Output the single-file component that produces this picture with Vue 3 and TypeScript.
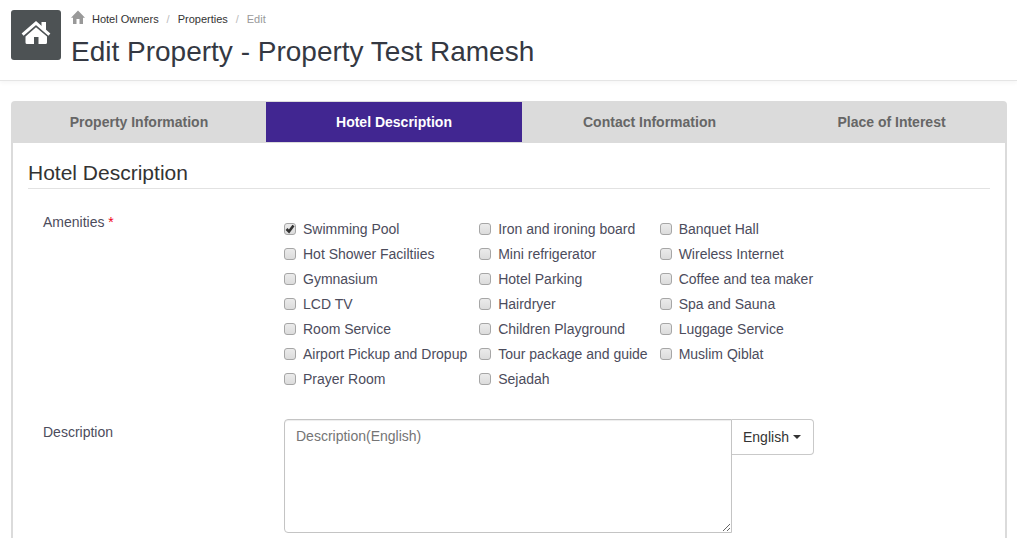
<script setup lang="ts">
import { ref } from 'vue'

interface Amenity {
  label: string
  checked: boolean
}

const tabs: string[] = ['Property Information', 'Hotel Description', 'Contact Information', 'Place of Interest']
const activeTab = ref<string>('Hotel Description')
const description = ref<string>('')

const amenities = ref<Amenity[]>(
  [
    'Swimming Pool', 'Iron and ironing board', 'Banquet Hall',
    'Hot Shower Faciltiies', 'Mini refrigerator', 'Wireless Internet',
    'Gymnasium', 'Hotel Parking', 'Coffee and tea maker',
    'LCD TV', 'Hairdryer', 'Spa and Sauna',
    'Room Service', 'Children Playground', 'Luggage Service',
    'Airport Pickup and Dropup', 'Tour package and guide', 'Muslim Qiblat',
    'Prayer Room', 'Sejadah',
  ].map((label, i) => ({ label, checked: i === 0 })),
)
</script>

<template>
  <div class="page">
    <header class="header">
      <div class="logo">
        <svg width="30" height="26" viewBox="0 0 30 26" aria-hidden="true">
          <path fill="none" stroke="#fff" stroke-width="3" d="M1.6 14.6 15 3 28.4 14.6" />
          <path fill="#fff" d="M20.5 2h4.5v8.5l-4.5-4zM15 7.2 26 16.500v6q0 1.500-1.500 1.500H17.500v-7h-4.500v7H6Q4.500 24 4.500 22.500V16.500z" />
        </svg>
      </div>
      <div class="heading">
        <nav class="crumbs" aria-label="Breadcrumb">
          <svg class="home" width="14" height="14" viewBox="0 0 14 14" aria-hidden="true">
            <path fill="#999" d="M7 0.500 14 7.800H12V14H8.500V9H5.500v5H2V7.800H0z" />
          </svg>
          <a href="#owners">Hotel Owners</a>
          <span class="sep">/</span>
          <a href="#properties">Properties</a>
          <span class="sep">/</span>
          <span class="current">Edit</span>
        </nav>
        <h1>Edit Property - Property Test Ramesh</h1>
      </div>
    </header>

    <main class="main">
      <div class="tabs" role="tablist">
        <button
          v-for="tab in tabs"
          :key="tab"
          type="button"
          role="tab"
          class="tab"
          :class="{ active: tab === activeTab }"
          :aria-selected="tab === activeTab"
          @click="activeTab = tab"
        >{{ tab }}</button>
      </div>
      <form class="panel" @submit.prevent>
        <h2>Hotel Description</h2>
        <div class="row" role="group" aria-labelledby="amenities-label">
          <div id="amenities-label" class="label">Amenities <span class="required">*</span></div>
          <div class="amenities">
            <label v-for="item in amenities" :key="item.label" class="amenity">
              <span class="box">
                <input v-model="item.checked" type="checkbox">
                <svg v-if="item.checked" class="tick" width="12" height="12" viewBox="0 0 12 12" aria-hidden="true">
                  <path fill="none" stroke="#333" stroke-width="2.600" d="M2.500 6 5 8.500 9.500 2.500" />
                </svg>
              </span>
              {{ item.label }}
            </label>
          </div>
        </div>
        <div class="row description">
          <label class="label" for="description">Description</label>
          <div class="group">
            <textarea id="description" v-model="description" placeholder="Description(English)"></textarea>
            <button type="button" class="language" aria-haspopup="true">English <span class="caret"></span></button>
          </div>
        </div>
      </form>
    </main>
  </div>
</template>

<style>
body {
  margin: 0;
  background: #fff;
}
</style>

<style scoped>
.page {
  box-sizing: border-box;
  display: flex;
  flex-direction: column;
  min-height: 100vh;
  font: 14px/20px "Liberation Sans", Arial, sans-serif;
  color: #4c4c5c;
}
.header {
  display: flex;
  gap: 10px;
  height: 70px;
  padding: 10px 11px 0;
  border-bottom: 1px solid #e5e5e5;
  box-shadow: 0 2px 4px rgba(0, 0, 0, 0.04);
}
.logo {
  display: flex;
  align-items: center;
  justify-content: center;
  width: 50px;
  height: 50px;
  border-radius: 3px;
  background: #4d5254;
}
.logo svg {
  margin-bottom: 4px;
}
.crumbs {
  display: flex;
  align-items: center;
  height: 18px;
  font-size: 11px;
  line-height: 18px;
}
.crumbs a {
  color: #333;
  text-decoration: none;
}
.home {
  margin: 0 7px 4px 0;
}
.sep {
  width: 19px;
  text-align: center;
  color: #bbb;
}
.current {
  color: #999;
}
h1 {
  margin: 6px 0 0;
  font-size: 28px;
  line-height: 36px;
  font-weight: normal;
  color: #343842;
}
.main {
  display: flex;
  flex-direction: column;
  flex: 1;
  padding: 20px 10px 0 11px;
}
.tabs {
  display: grid;
  grid-template-columns: 254fr 256fr 255fr 229fr;
  padding: 1px;
  border-radius: 4px 4px 0 0;
  background: #dbdbdb;
}
.tab {
  height: 40px;
  padding: 0;
  border: 0;
  background: #dbdbdb;
  color: #666;
  font: bold 14px/20px "Liberation Sans", Arial, sans-serif;
}
.tab.active {
  background: #412691;
  color: #fff;
}
.panel {
  flex: 1;
  padding: 17px 15px 0;
  border: solid #dbdbdb;
  border-width: 0 2px;
}
h2 {
  margin: 0 0 20px;
  padding-bottom: 2px;
  border-bottom: 1px solid #e2e2e2;
  font-size: 21px;
  line-height: 26px;
  font-weight: normal;
  color: #333;
}
.row {
  display: grid;
  grid-template-columns: 241px 1fr;
  padding: 0 15px;
}
.label {
  line-height: 26px;
}
.required {
  color: #f00018;
}
.amenities {
  display: grid;
  grid-template-columns: repeat(3, max-content);
  grid-auto-rows: 25px;
  column-gap: 12px;
  padding-top: 7px;
}
.amenity {
  display: flex;
  align-items: center;
  gap: 7px;
}
.box {
  position: relative;
  width: 12px;
  height: 12px;
}
.box input {
  display: block;
  appearance: none;
  box-sizing: border-box;
  width: 12px;
  height: 12px;
  margin: 0;
  border: 1px solid #a6a6a6;
  border-radius: 3px;
  background: linear-gradient(#ebebeb, #dcdcdc);
}
.tick {
  position: absolute;
  top: 0;
  left: 0;
  pointer-events: none;
}
.description {
  margin-top: 28px;
}
.group {
  display: flex;
  align-items: flex-start;
}
textarea {
  box-sizing: border-box;
  display: block;
  width: 448px;
  height: 114px;
  padding: 6px 11px;
  border: 1px solid #c4c4c4;
  border-radius: 4px 0 0 4px;
  box-shadow: inset 0 1px 1px rgba(0, 0, 0, 0.075);
  font: 14px/20px "Liberation Sans", Arial, sans-serif;
}
textarea::placeholder {
  color: #757575;
}
.language {
  display: flex;
  align-items: center;
  gap: 4px;
  box-sizing: border-box;
  height: 36px;
  padding: 0 12px 0 11px;
  border: 1px solid #c9c9c9;
  border-left: 0;
  border-radius: 0 4px 4px 0;
  background: #fff;
  color: #333;
  font: 14px/20px "Liberation Sans", Arial, sans-serif;
}
.caret {
  border: 4px solid transparent;
  border-top-color: #333;
  border-bottom: 0;
}
</style>
